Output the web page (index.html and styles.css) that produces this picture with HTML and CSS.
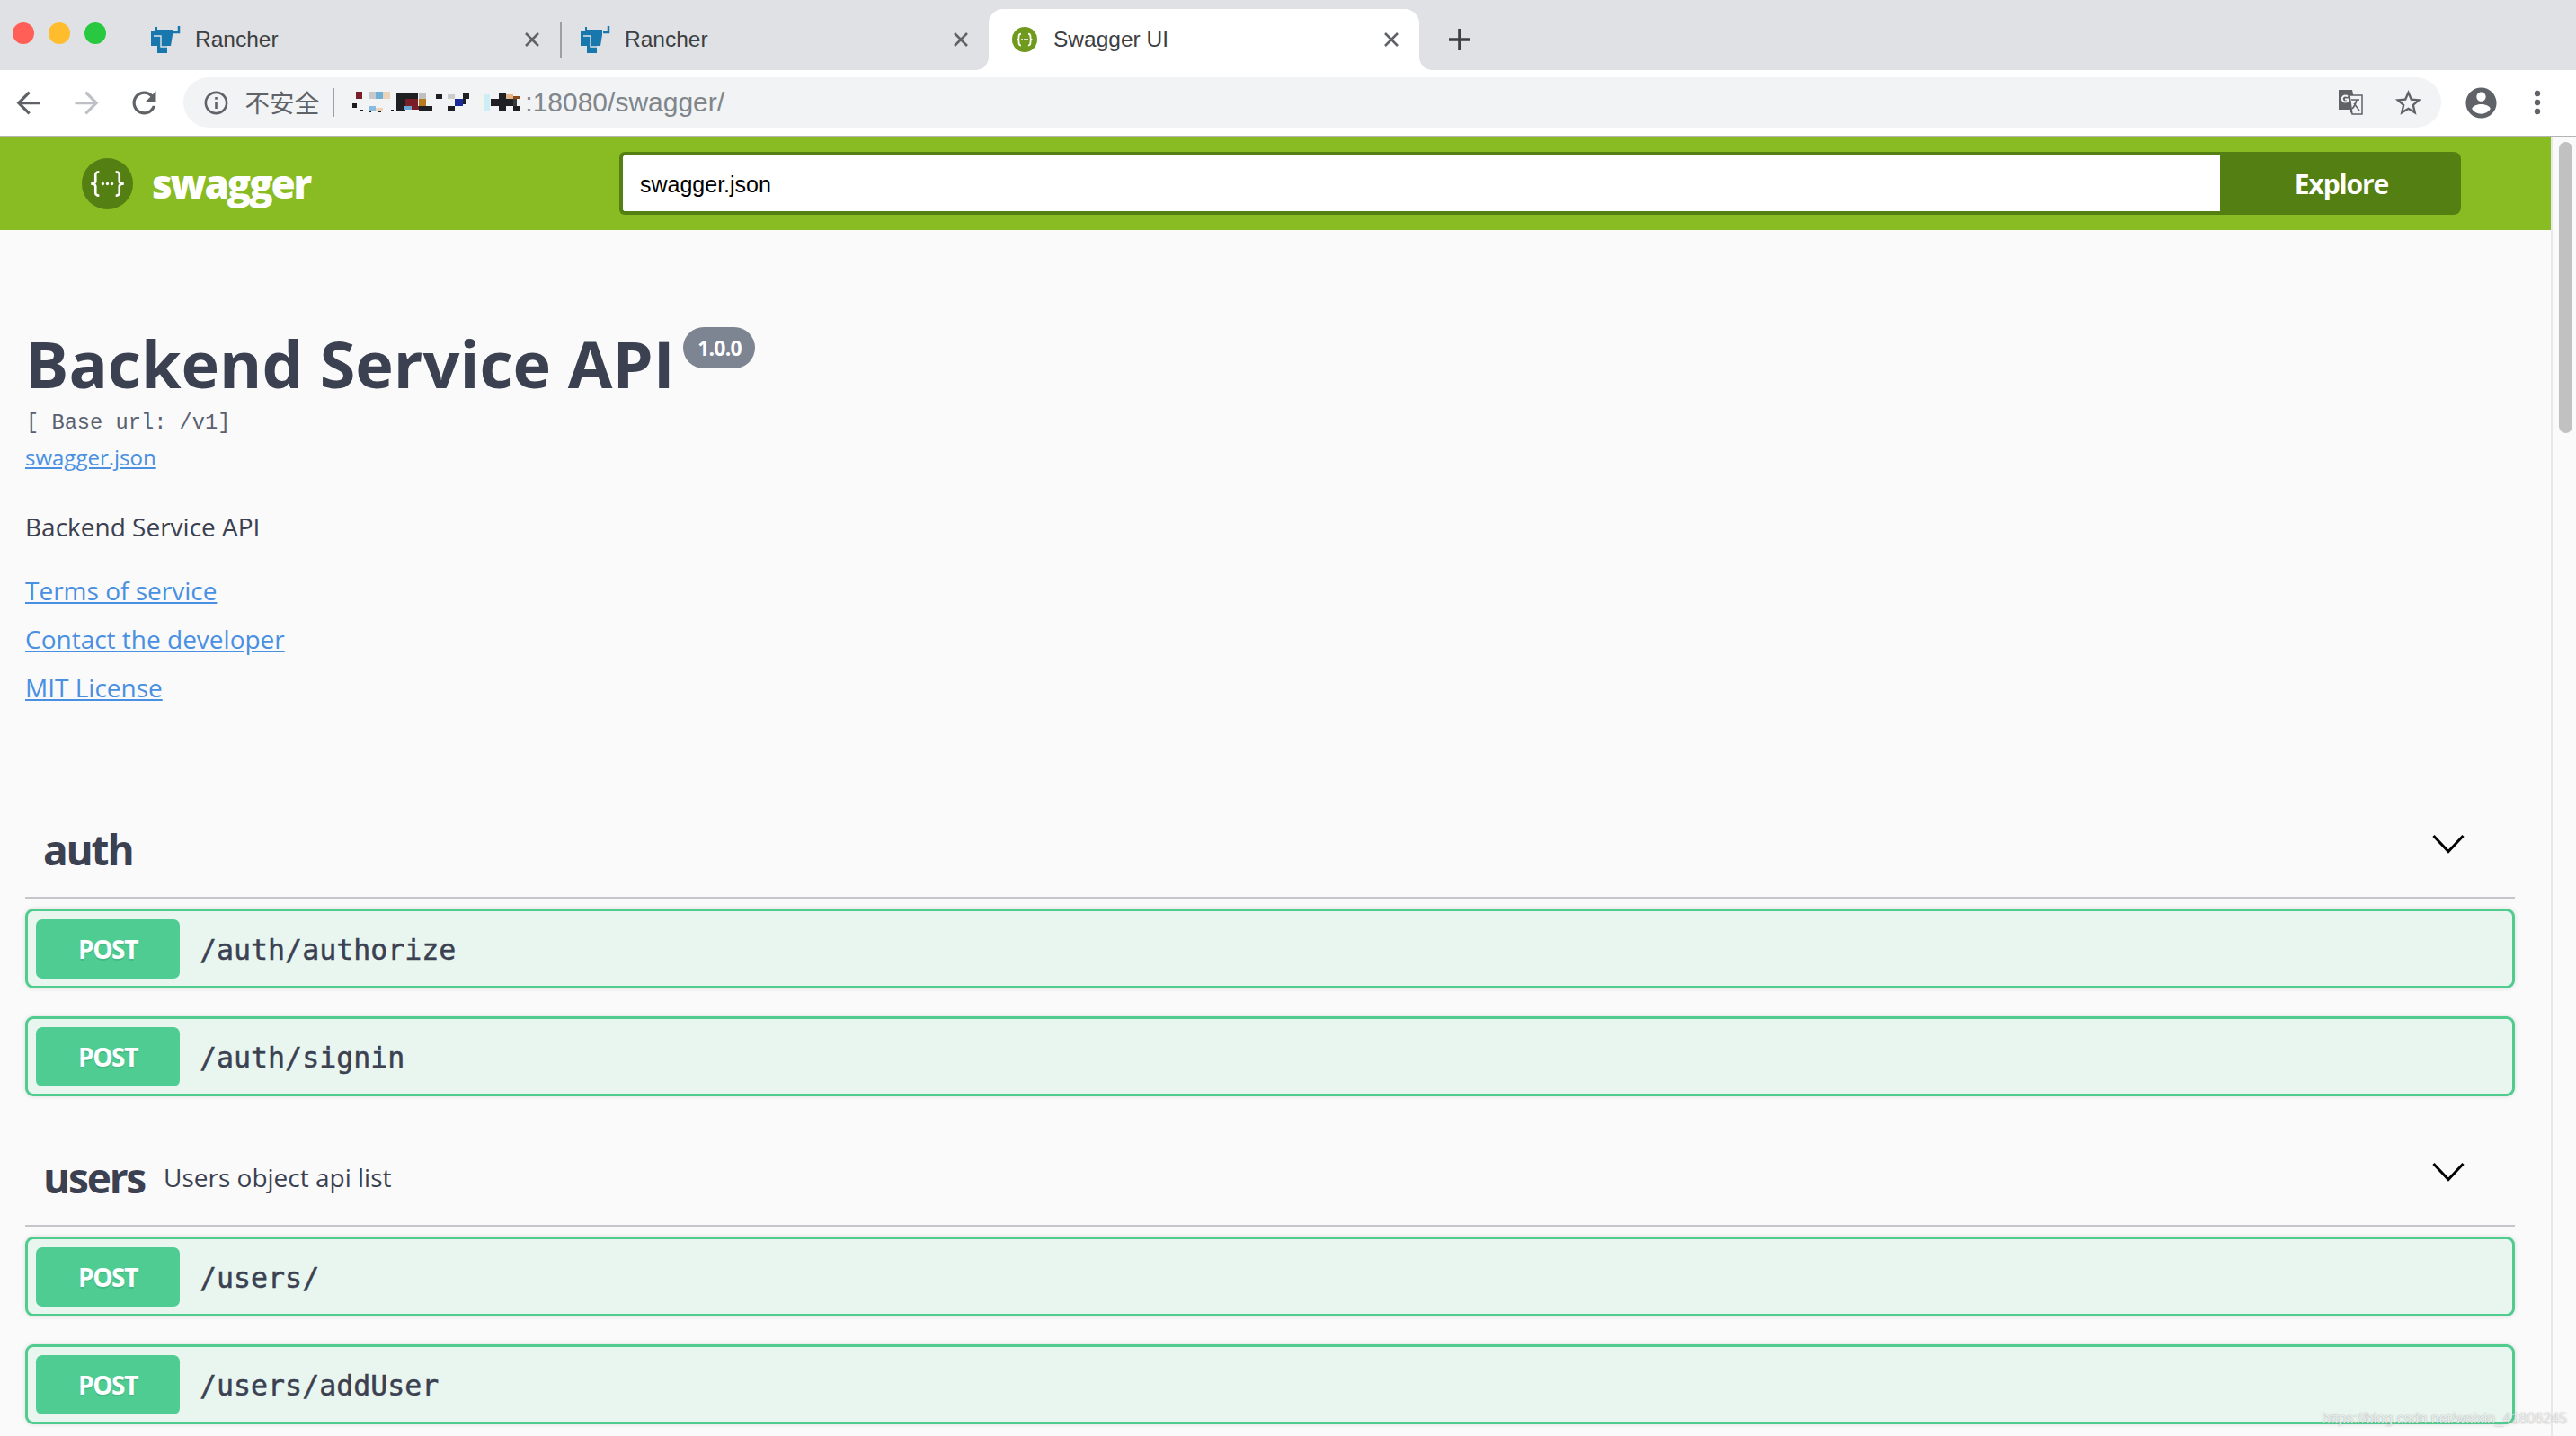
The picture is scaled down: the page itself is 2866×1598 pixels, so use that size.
FILE: index.html
```html
<!DOCTYPE html>
<html lang="en">
<head>
<meta charset="utf-8">
<title>Swagger UI</title>
<link rel="stylesheet" href="styles.css">
</head>
<body>
<div class="frame">
  <div class="tabstrip">
    <div class="lights"><span class="light red"></span><span class="light amber"></span><span class="light green"></span></div>
    <div class="tab tab-first">
      <svg class="rancher" viewBox="0 0 34 30"><path fill="#1878ad" d="M1 6H6V1H8V4H25V10L23 22H19V30H8V22H1Z"/><path fill="none" stroke="#1878ad" stroke-width="2.5" d="M32 0V7H26"/><path fill="none" stroke="#dfe1e5" stroke-width="1.4" d="M4 11H12V23H20"/></svg>
      <span class="tab-title">Rancher</span>
      <svg class="close" viewBox="0 0 18 16"><path d="M2 1L16 15M16 1L2 15"/></svg>
    </div>
    <span class="tab-sep"></span>
    <div class="tab tab-second">
      <svg class="rancher" viewBox="0 0 34 30"><path fill="#1878ad" d="M1 6H6V1H8V4H25V10L23 22H19V30H8V22H1Z"/><path fill="none" stroke="#1878ad" stroke-width="2.5" d="M32 0V7H26"/><path fill="none" stroke="#dfe1e5" stroke-width="1.4" d="M4 11H12V23H20"/></svg>
      <span class="tab-title">Rancher</span>
      <svg class="close" viewBox="0 0 18 16"><path d="M2 1L16 15M16 1L2 15"/></svg>
    </div>
    <div class="tab tab-active">
      <svg class="favicon" viewBox="0 0 56 56"><circle cx="28" cy="28" r="28" fill="#6f9a1e"/><path fill="none" stroke="#fff" stroke-width="3.5" d="M20 15C15 15 15 18 15 22V25C15 27 14 28 11 28C14 28 15 29 15 31V34C15 38 15 41 20 41M36 15C41 15 41 18 41 22V25C41 27 42 28 45 28C42 28 41 29 41 31V34C41 38 41 41 36 41"/><circle cx="22" cy="28" r="2" fill="#fff"/><circle cx="28" cy="28" r="2" fill="#fff"/><circle cx="34" cy="28" r="2" fill="#fff"/></svg>
      <span class="tab-title">Swagger UI</span>
      <svg class="close" viewBox="0 0 18 16"><path d="M2 1L16 15M16 1L2 15"/></svg>
    </div>
    <svg class="newtab" viewBox="0 0 24 24"><path d="M12 0V24M0 12H24"/></svg>
  </div>

  <div class="toolbar">
    <svg class="nav" viewBox="0 0 24 24"><path d="M20 11H7.83l5.59-5.59L12 4l-8 8 8 8 1.41-1.41L7.83 13H20v-2z"/></svg>
    <svg class="nav nav-off" viewBox="0 0 24 24"><path d="M4 11h12.17l-5.59-5.59L12 4l8 8-8 8-1.41-1.41L16.17 13H4v-2z"/></svg>
    <svg class="nav" viewBox="0 0 24 24"><path d="M17.65 6.35C16.2 4.9 14.21 4 12 4c-4.42 0-7.99 3.58-7.99 8s3.57 8 7.99 8c3.73 0 6.84-2.55 7.73-6h-2.08c-.82 2.33-3.04 4-5.65 4-3.31 0-6-2.69-6-6s2.69-6 6-6c1.66 0 3.14.69 4.22 1.78L13 11h7V4l-2.35 2.35z"/></svg>
    <div class="omnibox">
      <svg class="info-icon" viewBox="0 0 24 24"><path d="M11 7h2v2h-2zm0 4h2v6h-2zm1-9C6.48 2 2 6.48 2 12s4.48 10 10 10 10-4.48 10-10S17.52 2 12 2zm0 18c-4.41 0-8-3.59-8-8s3.59-8 8-8 8 3.59 8 8-3.59 8-8 8z"/></svg>
      <span class="insecure">不安全</span>
      <span class="omni-sep"></span>
      <svg class="mosaic" viewBox="393 100 190 28" shape-rendering="crispEdges">
        <rect x="398" y="102" width="7" height="8" fill="#7a1f2a"/><rect x="394" y="115" width="5" height="5" fill="#1c1c1e"/>
        <rect x="403" y="122" width="3" height="2" fill="#1c1c1e"/><rect x="412" y="102" width="8" height="8" fill="#c8c8c8"/>
        <rect x="420" y="102" width="8" height="8" fill="#6fb0d8"/><rect x="428" y="102" width="8" height="8" fill="#ecd3b8"/>
        <rect x="412" y="118" width="8" height="5" fill="#86bce0"/><rect x="420" y="120" width="8" height="3" fill="#ecd3b8"/>
        <rect x="412" y="123" width="3" height="2" fill="#1c1c1e"/><rect x="423" y="123" width="3" height="2" fill="#1c1c1e"/><rect x="437" y="122" width="3" height="2" fill="#1c1c1e"/>
        <rect x="443" y="103" width="24" height="7" fill="#1f2023"/><rect x="443" y="110" width="10" height="14" fill="#1f2023"/>
        <rect x="453" y="110" width="14" height="8" fill="#7a1f28"/><rect x="468" y="103" width="8" height="7" fill="#c0c0c0"/>
        <rect x="468" y="110" width="8" height="8" fill="#b87a1e"/><rect x="452" y="118" width="8" height="4" fill="#6aa8d5"/>
        <rect x="460" y="118" width="8" height="4" fill="#7a1e28"/><rect x="468" y="118" width="15" height="6" fill="#1f2023"/>
        <rect x="487" y="105" width="7" height="5" fill="#1f2023"/><rect x="500" y="105" width="8" height="5" fill="#cccccc"/>
        <rect x="517" y="104" width="7" height="6" fill="#1f2023"/><rect x="508" y="110" width="9" height="8" fill="#1a2a9a"/>
        <rect x="500" y="118" width="8" height="6" fill="#1f2023"/><rect x="517" y="110" width="4" height="6" fill="#1f2023"/>
        <rect x="533" y="105" width="7" height="14" fill="#f2f5ef"/><rect x="540" y="105" width="7" height="18" fill="#cdeef4"/>
        <rect x="557" y="104" width="8" height="6" fill="#1f2023"/><rect x="565" y="105" width="8" height="5" fill="#e5b58a"/>
        <rect x="573" y="107" width="7" height="3" fill="#8a4a20"/><rect x="548" y="110" width="25" height="8" fill="#1f2023"/>
        <rect x="573" y="110" width="4" height="8" fill="#3a3a3a"/><rect x="557" y="118" width="8" height="6" fill="#1f2023"/>
        <rect x="573" y="118" width="7" height="6" fill="#1f2023"/>
      </svg>
      <span class="url">:18080/swagger/</span>
      <svg class="translate" viewBox="0 0 28 28">
        <path fill="#5f6368" d="M1 0H16L21 24H16L14 26V22H1Z"/>
        <path fill="#f1f3f4" stroke="#5f6368" stroke-width="1.5" d="M13 6H27V27H16Z"/>
        <path fill="none" stroke="#f1f3f4" stroke-width="2" d="M11 7.5A3.6 3.6 0 1 0 11 12.5V10.5H8"/>
        <path fill="none" stroke="#5f6368" stroke-width="1.5" d="M15 11H24M21 11C20 16 18 19 16 21M18 15L24 23"/>
      </svg>
      <svg class="star" viewBox="0 0 24 24"><path d="M22 9.24l-7.19-.62L12 2 9.19 8.63 2 9.24l5.46 4.73L5.82 21 12 17.27 18.18 21l-1.63-7.03L22 9.24zM12 15.4l-3.76 2.27 1-4.28-3.32-2.88 4.38-.38L12 6.1l1.71 4.04 4.38.38-3.32 2.88 1 4.28L12 15.4z"/></svg>
    </div>
    <svg class="avatar" viewBox="0 0 24 24"><path d="M12 2C6.48 2 2 6.48 2 12s4.48 10 10 10 10-4.48 10-10S17.52 2 12 2zm0 3c1.66 0 3 1.34 3 3s-1.34 3-3 3-3-1.34-3-3 1.34-3 3-3zm0 14.2c-2.5 0-4.71-1.28-6-3.22.03-1.99 4-3.08 6-3.08 1.99 0 5.97 1.09 6 3.08-1.29 1.94-3.5 3.22-6 3.22z"/></svg>
    <svg class="dots" viewBox="0 0 8 28"><circle cx="4" cy="4" r="3.2"/><circle cx="4" cy="14" r="3.2"/><circle cx="4" cy="24" r="3.2"/></svg>
  </div>

  <div class="viewport">
    <div class="page">
      <header class="topbar">
        <svg class="logo" viewBox="0 0 56 56"><circle cx="28" cy="28" r="28" fill="#547f12"/><path fill="none" stroke="#fff" stroke-width="2.6" d="M19 15C14 15 15 18 15 22V25C15 27 13 28 10 28C13 28 15 29 15 31V34C15 38 14 41 19 41M37 15C42 15 41 18 41 22V25C41 27 43 28 46 28C43 28 41 29 41 31V34C41 38 42 41 37 41"/><circle cx="23" cy="28" r="1.6" fill="#fff"/><circle cx="28" cy="28" r="1.6" fill="#fff"/><circle cx="33" cy="28" r="1.6" fill="#fff"/></svg>
        <span class="brand">swagger</span>
        <div class="explore-form">
          <div class="spec-input">swagger.json</div>
          <div class="explore">Explore</div>
        </div>
      </header>

      <section class="info">
        <div class="title-row">
          <h1 class="title">Backend Service API</h1>
          <span class="version">1.0.0</span>
        </div>
        <div class="base-url">[ Base url: /v1]</div>
        <a class="link spec-link" href="#">swagger.json</a>
        <p class="description">Backend Service API</p>
        <a class="link info-link" href="#">Terms of service</a>
        <a class="link info-link" href="#">Contact the developer</a>
        <a class="link info-link" href="#">MIT License</a>
      </section>

      <section class="tag tag-auth">
        <div class="tag-head">
          <h2 class="tag-name">auth</h2>
          <svg class="chevron" viewBox="0 0 36 22"><path d="M1.5 2L18 19.5L34.5 2"/></svg>
        </div>
        <div class="ops">
          <div class="op"><span class="method">POST</span><span class="path">/auth/authorize</span></div>
          <div class="op"><span class="method">POST</span><span class="path">/auth/signin</span></div>
        </div>
      </section>

      <section class="tag tag-users">
        <div class="tag-head">
          <h2 class="tag-name">users</h2>
          <span class="tag-desc">Users object api list</span>
          <svg class="chevron" viewBox="0 0 36 22"><path d="M1.5 2L18 19.5L34.5 2"/></svg>
        </div>
        <div class="ops">
          <div class="op"><span class="method">POST</span><span class="path">/users/</span></div>
          <div class="op"><span class="method">POST</span><span class="path">/users/addUser</span></div>
        </div>
      </section>
    </div>
    <div class="scrollbar"><span class="thumb"></span></div>
    <div class="watermark">https://blog.csdn.net/weixin_41806245</div>
  </div>
</div>
</body>
</html>
```

FILE: styles.css
```css
* { box-sizing: border-box; }
html, body { margin: 0; padding: 0; background: #fafafa; }
.frame { width: 2866px; height: 1598px; overflow: hidden; display: flex; flex-direction: column; font-family: "Open Sans", sans-serif; color: #3b4151; }

/* tab strip */
.tabstrip { height: 78px; flex: none; background: #dfe1e5; display: flex; align-items: stretch; }
.lights { width: 167px; flex: none; display: flex; align-items: flex-start; gap: 16px; padding: 25px 0 0 14px; }
.light { width: 24px; height: 24px; border-radius: 50%; }
.red { background: #ff5f57; }
.amber { background: #ffbd2e; }
.green { background: #28c940; }
.tab { display: flex; align-items: center; margin-top: 10px; font-family: "Liberation Sans", Arial, sans-serif; font-size: 24.5px; color: #3c4043; }
.tab-first { width: 456px; }
.tab-sep { width: 2px; height: 40px; margin-top: 25px; background: #9aa0a6; flex: none; }
.tab-second { width: 475px; padding-left: 20px; }
.tab-active { width: 479px; background: #fff; border-radius: 16px 16px 0 0; padding-left: 26px; position: relative; }
.tab-active::before, .tab-active::after { content: ""; position: absolute; bottom: 0; width: 14px; height: 14px; background: radial-gradient(circle at 0 0, #dfe1e5 13.5px, #fff 14px); }
.tab-active::before { left: -14px; }
.tab-active::after { right: -14px; background: radial-gradient(circle at 100% 0, #dfe1e5 13.5px, #fff 14px); }
.rancher { width: 34px; height: 30px; flex: none; margin-right: 16px; }
.favicon { width: 28px; height: 28px; flex: none; margin-right: 18px; }
.tab-title { flex: 1; white-space: nowrap; }
.close { width: 18px; height: 16px; flex: none; margin-right: 22px; fill: none; stroke: #5f6368; stroke-width: 2.6; }
.newtab { width: 24px; height: 24px; margin: 32px 0 0 33px; fill: none; stroke: #3c4043; stroke-width: 3.6; flex: none; }

/* toolbar */
.toolbar { height: 74px; flex: none; background: #fff; border-bottom: 1px solid #b4b4b4; display: flex; align-items: center; padding-left: 12px; gap: 25.5px; padding-bottom: 1px; }
.nav { width: 39px; height: 39px; fill: #5f6368; flex: none; }
.nav-off { fill: #bdc1c6; }
.omnibox { width: 2512px; height: 56px; margin-left: -2px; border-radius: 28px; background: #f1f3f4; display: flex; align-items: center; padding-left: 21px; flex: none; }
.info-icon { width: 31px; height: 31px; fill: #5f6368; flex: none; }
.insecure { margin-left: 17px; padding-bottom: 3px; font-family: "Noto Sans CJK SC", sans-serif; font-size: 27.6px; color: #5f6368; white-space: nowrap; }
.omni-sep { width: 2px; height: 32px; margin-left: 15px; background: #9aa0a6; }
.mosaic { width: 190px; height: 28px; margin-left: 19px; flex: none; }
.url { margin-left: 3px; font-family: "Liberation Sans", Arial, sans-serif; font-size: 30px; color: #80868b; white-space: nowrap; }
.translate { width: 28px; height: 28px; margin-left: auto; flex: none; }
.star { width: 35px; height: 35px; margin: 0 19px 0 33px; fill: #5f6368; flex: none; }
.avatar { width: 41px; height: 41px; margin-left: -1px; fill: #5f6368; flex: none; }
.dots { width: 8px; height: 28px; margin-left: 12px; fill: #5f6368; flex: none; }

/* page */
.viewport { flex: 1; display: flex; position: relative; overflow: hidden; }
.page { width: 2838px; flex: none; background: #fafafa; }
.scrollbar { flex: 1; background: #fafafa; border-left: 2px solid #e8e8e8; padding: 6px 4px 0 7px; }
.thumb { display: block; height: 324px; background: #c1c1c1; border-radius: 8px; }
.watermark { position: absolute; right: 10px; bottom: 10px; font-family: "Liberation Sans", Arial, sans-serif; font-size: 16px; color: rgba(255,255,255,.75); text-shadow: 0 0 1.5px rgba(120,120,120,.75); }

/* top bar */
.topbar { height: 104px; background: #89bb23; display: flex; align-items: center; padding-left: 91px; }
.logo { width: 57px; height: 57px; flex: none; }
.brand { margin-left: 21px; color: #fff; font-weight: 800; font-size: 44px; line-height: 1; letter-spacing: -2.2px; }
.explore-form { width: 2049px; height: 70px; margin-left: auto; margin-right: 100px; display: flex; }
.spec-input { flex: 1; background: #fff; border: 4px solid #547f12; border-right: 0; border-radius: 6px 0 0 6px; font-family: "Liberation Sans", Arial, sans-serif; font-size: 25px; color: #000; padding-left: 19px; line-height: 64px; }
.explore { width: 268px; background: #547f12; border-radius: 0 8px 8px 0; color: #fff; font-weight: 700; font-size: 30px; letter-spacing: -1.1px; display: flex; align-items: center; justify-content: center; padding-left: 2px; }

/* info */
.info { padding: 105px 0 0 28px; display: flex; flex-direction: column; align-items: flex-start; }
.title-row { display: flex; align-items: flex-start; }
.title { margin: 0; font-size: 72px; font-weight: 700; line-height: 86px; white-space: nowrap; color: #3b4151; }
.version { margin: 3px 0 0 10px; width: 80px; height: 46px; border-radius: 23px; background: #7d8492; color: #fff; font-weight: 700; font-size: 23px; letter-spacing: -.8px; display: flex; align-items: center; justify-content: center; }
.base-url { margin: 9px 0 0 1px; font-family: "Liberation Mono", monospace; font-size: 23.7px; line-height: 30px; white-space: pre; color: #5a6070; }
.link { color: #4990e2; font-size: 28px; line-height: 30px; }
.spec-link { margin-top: 8px; font-size: 24px; }
.description { margin: 47px 0 0; font-size: 28px; line-height: 30px; color: #3b4151; }
.info-link { margin-bottom: 24px; }
.description + .info-link { margin-top: 41px; }

/* tags */
.tag { padding: 0 40px 0 28px; }
.tag-auth { margin-top: 96px; }
.tag-users { margin-top: 45px; }
.tag-head { height: 100px; border-bottom: 2px solid #c5c6cb; display: flex; align-items: center; padding-left: 20px; }
.tag-name { margin: 0 0 8px; font-size: 46px; font-weight: 700; line-height: 1; letter-spacing: -2.2px; color: #3b4151; }
.tag-desc { margin: 0 0 8px 21px; font-size: 28px; color: #3b4151; }
.chevron { width: 36px; height: 22px; margin: 0 56px 20px auto; fill: none; stroke: #000; stroke-width: 3; flex: none; }
.ops { display: flex; flex-direction: column; gap: 31px; padding-top: 11px; }
.op { height: 89px; background: #e9f6f0; border: 3px solid #50cc8f; border-radius: 9px; display: flex; align-items: center; padding-left: 9px; box-shadow: 0 0 5px rgba(0,0,0,.12); }
.method { width: 160px; height: 66px; background: #4fcc92; border-radius: 7px; color: #fff; font-weight: 700; font-size: 28px; letter-spacing: -1.4px; display: flex; align-items: center; justify-content: center; text-shadow: 0 2px 0 rgba(0,0,0,.1); }
.path { margin-left: 22px; padding-top: 2px; font-family: "DejaVu Sans Mono", monospace; font-size: 31.6px; color: #3b4151; -webkit-text-stroke: .5px #3b4151; }
```
